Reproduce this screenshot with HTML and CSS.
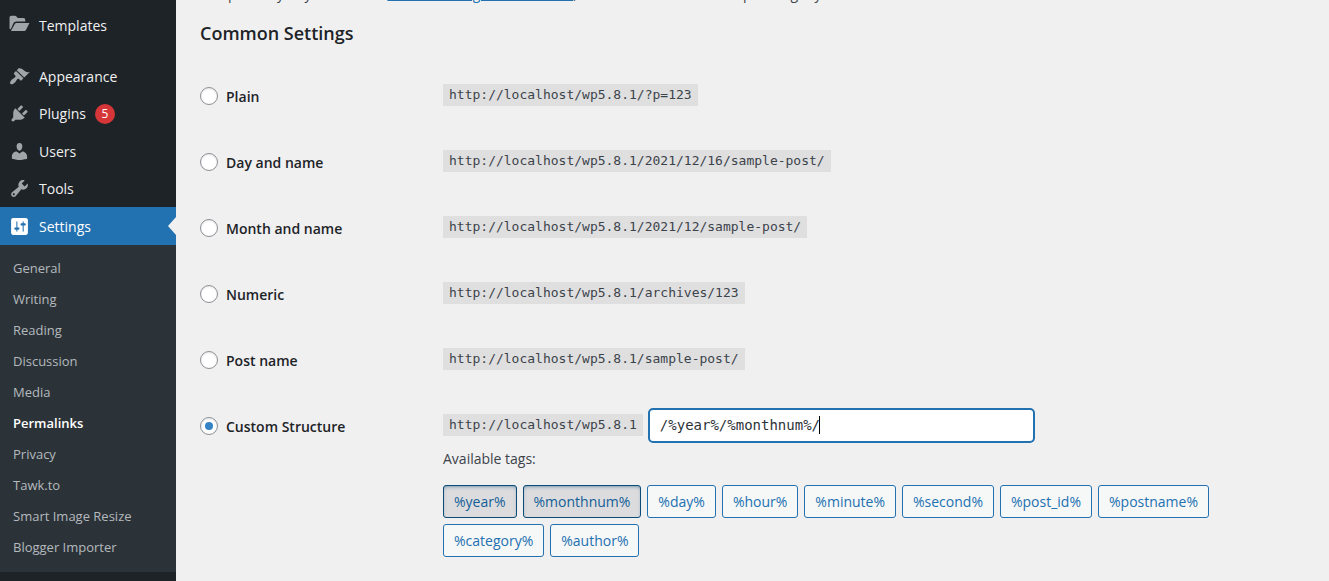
FILE: index.html
```html
<!DOCTYPE html>
<html lang="en">
<head>
    <meta charset="UTF-8">
    <meta name="viewport" content="width=device-width, initial-scale=1.0">
    <title>Permalink Settings</title>
    <link rel="stylesheet" href="styles.css">
</head>
<body>

<div class="admin">
    <!-- Admin menu -->
    <nav class="menu">
        <a class="menu-item menu-last" href="#">
            <svg class="icon" viewBox="0 0 20 20"><path d="M0.500 13V2.700C.5 1.500 1.200.8 2.300.8h3.400c1.200 0 1.700 1.400 2.600 2h5.400c1.100 0 1.800.8 1.800 2v1.500H7.200C5.600 6.300 4.700 7 4 8.300L1.700 13.500zM1.800 15.300L5.100 9.400C5.600 8.200 6.200 7.700 7.400 7.700H19.500l-3.100 6.100c-.6 1.100-1.200 1.500-2.400 1.500z"/></svg>
            Templates
        </a>
        <a class="menu-item" href="#">
            <svg class="icon" viewBox="0 0 20 20"><path d="M14.480 11.060L7.410 3.990l1.500-1.500c.5-.56 2.300-.47 3.510.32 1.210.8 1.430 1.280 2.910 2.100 1.180.64 2.450 1.260 4.450.85zm-.71.710L6.700 4.700 4.930 6.470c-.39.39-.39 1.020 0 1.410l1.060 1.060c.39.39.39 1.030 0 1.420-.6.600-1.430 1.110-2.210 1.690-.35.260-.7.530-1.010.840C1.430 14.230.4 16.080 1.400 17.070c.99 1 2.840-.03 4.180-1.360.31-.31.580-.66.850-1.020.570-.78 1.080-1.610 1.690-2.210.39-.39 1.020-.39 1.410 0l1.060 1.060c.39.39 1.020.39 1.410 0z"/></svg>
            Appearance
        </a>
        <a class="menu-item" href="#">
            <svg class="icon" viewBox="0 0 20 20"><path d="M13.110 4.360L9.870 7.600 8 5.730l3.240-3.240c.350-.34 1.050-.2 1.560.32.520.51.660 1.210.310 1.550zm-8 1.770l.91-1.120 9.010 9.010-1.190.84c-.71.710-2.630 1.160-3.820 1.160H6.140L4.900 17.260c-.59.590-1.540.590-2.120 0-.59-.58-.59-1.530 0-2.120l1.240-1.240v-3.880c0-1.130.4-3.190 1.090-3.890zm7.260 3.970l3.240-3.240c.340-.35 1.040-.21 1.550.31.520.51.660 1.210.310 1.550l-3.240 3.250z"/></svg>
            Plugins
            <span class="count">5</span>
        </a>
        <a class="menu-item" href="#">
            <svg class="icon" viewBox="0 0 20 20"><path d="M10 9.250c-2.270 0-2.730-3.440-2.730-3.440C7 4.020 7.820 2 9.970 2c2.160 0 2.980 2.020 2.710 3.810 0 0-.41 3.440-2.680 3.440zm0 2.570L12.720 10c2.390 0 4.520 2.330 4.520 4.530v2.490s-3.650 1.130-7.240 1.130c-3.650 0-7.240-1.130-7.240-1.130v-2.490c0-2.250 1.940-4.480 4.470-4.480z"/></svg>
            Users
        </a>
        <a class="menu-item" href="#">
            <svg class="icon" viewBox="0 0 20 20"><path d="M16.680 9.770c-1.340 1.340-3.300 1.670-4.950.99l-5.410 6.520c-.99.990-2.590.990-3.580 0s-.99-2.590 0-3.570l6.520-5.420c-.68-1.650-.35-3.610.99-4.950 1.280-1.280 3.120-1.620 4.720-1.060l-2.890 2.890 2.820 2.820 2.860-2.870c.530 1.580.180 3.390-1.080 4.650zM3.810 16.210c.4.390 1.040.39 1.430 0 .4-.4.400-1.040 0-1.430-.39-.4-1.030-.4-1.430 0-.39.39-.39 1.030 0 1.430z"/></svg>
            Tools
        </a>
        <a class="menu-item menu-current" href="#">
            <svg class="icon" viewBox="0 0 20 20"><path d="M18 16V4c0-1.100-.9-2-2-2H4c-1.100 0-2 .9-2 2v12c0 1.100.9 2 2 2h12c1.100 0 2-.9 2-2zM8 11h1c.550 0 1 .45 1 1s-.45 1-1 1H8v1.500c0 .280-.22.500-.5.500s-.5-.22-.5-.5V13H6c-.55 0-1-.45-1-1s.45-1 1-1h1V5.500c0-.28.220-.5.500-.5s.5.220.5.500V11zm5-2h-1c-.55 0-1-.45-1-1s.45-1 1-1h1V5.500c0-.28.220-.5.500-.5s.5.220.5.500V7h1c.550 0 1 .45 1 1s-.45 1-1 1h-1v5.500c0 .280-.22.500-.5.500s-.5-.22-.5-.5V9z"/></svg>
            Settings
        </a>
        <div class="submenu">
            <a href="#">General</a>
            <a href="#">Writing</a>
            <a href="#">Reading</a>
            <a href="#">Discussion</a>
            <a href="#">Media</a>
            <a class="active" href="#">Permalinks</a>
            <a href="#">Privacy</a>
            <a href="#">Tawk.to</a>
            <a href="#">Smart Image Resize</a>
            <a href="#">Blogger Importer</a>
        </div>
    </nav>

    <main class="content">
        <p class="intro">compatibility of your links. A <a href="#">number of tags are available</a>, and here are some examples to get you started.</p>
        <h2>Common Settings</h2>

        <form>
            <div class="option">
                <label><input type="radio" name="structure">Plain</label>
                <div class="example"><code>http://localhost/wp5.8.1/?p=123</code></div>
            </div>
            <div class="option">
                <label><input type="radio" name="structure">Day and name</label>
                <div class="example"><code>http://localhost/wp5.8.1/2021/12/16/sample-post/</code></div>
            </div>
            <div class="option">
                <label><input type="radio" name="structure">Month and name</label>
                <div class="example"><code>http://localhost/wp5.8.1/2021/12/sample-post/</code></div>
            </div>
            <div class="option">
                <label><input type="radio" name="structure">Numeric</label>
                <div class="example"><code>http://localhost/wp5.8.1/archives/123</code></div>
            </div>
            <div class="option">
                <label><input type="radio" name="structure">Post name</label>
                <div class="example"><code>http://localhost/wp5.8.1/sample-post/</code></div>
            </div>
            <div class="option">
                <label><input type="radio" name="structure" checked>Custom Structure</label>
                <div>
                    <div class="example">
                        <code>http://localhost/wp5.8.1</code>
                        <span class="field">
                            <input type="text" id="permalink" aria-label="Custom structure" value="/%year%/%monthnum%/">
                            <span class="caret"></span>
                        </span>
                    </div>
                    <p class="tags-title">Available tags:</p>
                    <div class="tags">
                        <button type="button" class="pressed">%year%</button>
                        <button type="button" class="pressed">%monthnum%</button>
                        <button type="button">%day%</button>
                        <button type="button">%hour%</button>
                        <button type="button">%minute%</button>
                        <button type="button">%second%</button>
                        <button type="button">%post_id%</button>
                        <button type="button">%postname%</button>
                        <button type="button">%category%</button>
                        <button type="button">%author%</button>
                    </div>
                </div>
            </div>
        </form>
    </main>
</div>

</body>
</html>
```
FILE: styles.css
```css
* {
    box-sizing: border-box;
}
body {
    margin: 0;
    font-family: "Segoe UI", "Open Sans", "Noto Sans", sans-serif;
    font-size: 14px;
    background-color: #f0f0f1;
    color: #3c434a;
}
.admin {
    display: flex;
    min-height: 100vh;
    overflow: hidden;
}

/* Admin menu */
.menu {
    flex: none;
    width: 176px;
    padding-top: 7px;
    background-color: #1d2327;
}
.menu-item {
    display: flex;
    align-items: center;
    gap: 9px;
    height: 37px;
    padding-left: 9px;
    color: #f0f0f1;
    font-size: 14px;
    text-decoration: none;
}
.menu-item:nth-child(even) {
    height: 38px;
}
.menu-last {
    margin-bottom: 13px;
}
.icon {
    width: 21px;
    height: 21px;
    fill: #a0a5aa;
}
.count {
    width: 20px;
    height: 20px;
    border-radius: 50%;
    background-color: #d63638;
    color: #fff;
    font-size: 12px;
    line-height: 20px;
    text-align: center;
}
.menu-current {
    position: relative;
    background-color: #2271b1;
    color: #fff;
}
.menu-current .icon {
    fill: #fff;
}
.menu-current::after {
    content: "";
    position: absolute;
    right: 0;
    top: 10px;
    border: 9px solid transparent;
    border-left: 0;
    border-right-width: 8px;
    border-right-color: #f0f0f1;
}
.submenu {
    padding: 8px 0 9px;
    background-color: #2c3338;
}
.submenu a {
    display: block;
    padding-left: 13px;
    color: #b4b9be;
    font-size: 13px;
    line-height: 31px;
    text-decoration: none;
}
.submenu .active {
    color: #fff;
    font-weight: 600;
}

/* Settings page */
.content {
    flex: 1;
    min-width: 0;
    margin-top: -17px;
    padding: 0 21px 0 24px;
}
.intro {
    margin: 0;
    line-height: 22px;
    white-space: nowrap;
}
.intro a {
    color: #2271b1;
}
h2 {
    margin: 16px 0 18px;
    color: #1d2327;
    font-size: 18px;
    font-weight: 600;
    line-height: 24px;
}
.option {
    display: grid;
    grid-template-columns: 243px 1fr;
    min-height: 66px;
    padding-top: 20px;
}
.option label {
    display: flex;
    align-items: center;
    align-self: start;
    gap: 8px;
    height: 26px;
    color: #1d2327;
    font-weight: 600;
}
input[type="radio"] {
    appearance: none;
    display: grid;
    place-content: center;
    width: 18px;
    height: 18px;
    margin: 0;
    border: 1px solid #8c8f94;
    border-radius: 50%;
    background-color: #fff;
    box-shadow: inset 0 1px 2px rgba(0, 0, 0, 0.1);
}
input[type="radio"]:checked::before {
    content: "";
    width: 8px;
    height: 8px;
    border-radius: 50%;
    background-color: #3582c4;
}
code {
    padding: 0 6px;
    background-color: #dfdfe0;
    font-family: Consolas, "DejaVu Sans Mono", monospace;
    font-size: 13px;
    line-height: 22px;
}
.example {
    display: flex;
    align-items: center;
    gap: 5px;
    height: 24px;
}
.field {
    position: relative;
    flex: 0 1 387px;
}
.field input {
    display: block;
    width: 100%;
    height: 35px;
    padding: 0 10px;
    border: 2px solid #2271b1;
    border-radius: 5px;
    background-color: #fff;
    color: #2c3338;
    font-family: Consolas, "DejaVu Sans Mono", monospace;
    font-size: 14px;
}
.caret {
    position: absolute;
    top: 8px;
    left: 171px;
    width: 1px;
    height: 18px;
    background-color: #000;
}
.tags-title {
    margin: 11px 0 15px;
    line-height: 22px;
}
.tags {
    display: flex;
    flex-wrap: wrap;
    gap: 6px;
}
.tags button {
    height: 33px;
    padding: 0 10px;
    border: 1px solid #2271b1;
    border-radius: 3px;
    background-color: #f6f7f7;
    color: #2271b1;
    font-family: inherit;
    font-size: 14px;
    cursor: pointer;
}
.tags .pressed {
    border-color: #0a4b78;
    background-color: #dcdcde;
    color: #135e96;
    box-shadow: inset 0 2px 5px -3px #0a4b78;
}
```
